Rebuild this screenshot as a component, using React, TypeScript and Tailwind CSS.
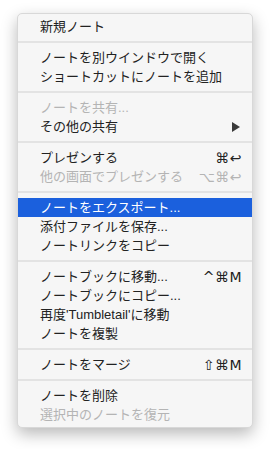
type Item = { label: string; shortcut?: string; disabled?: boolean; active?: boolean; submenu?: boolean };

const groups: Item[][] = [
  [{ label: "新規ノート" }],
  [{ label: "ノートを別ウインドウで開く" }, { label: "ショートカットにノートを追加" }],
  [{ label: "ノートを共有...", disabled: true }, { label: "その他の共有", submenu: true }],
  [
    { label: "プレゼンする", shortcut: "⌘↩" },
    { label: "他の画面でプレゼンする", shortcut: "⌥⌘↩", disabled: true },
  ],
  [
    { label: "ノートをエクスポート...", active: true },
    { label: "添付ファイルを保存..." },
    { label: "ノートリンクをコピー" },
  ],
  [
    { label: "ノートブックに移動...", shortcut: "^⌘M" },
    { label: "ノートブックにコピー..." },
    { label: "再度'Tumbletail'に移動" },
    { label: "ノートを複製" },
  ],
  [{ label: "ノートをマージ", shortcut: "⇧⌘M" }],
  [{ label: "ノートを削除" }, { label: "選択中のノートを復元", disabled: true }],
];

function Row({ item }: { item: Item }) {
  const color = item.active ? "text-white bg-[#1b60dd]" : item.disabled ? "text-[#b4b4b4]" : "text-[#222222]";
  return (
    <div className={`flex h-[19px] items-center justify-between pl-[22px] pr-[10px] ${color}`}>
      <span>{item.label}</span>
      {item.shortcut && (
        <span className="font-['DejaVu_Sans','Liberation_Sans',sans-serif] text-[14px] tracking-[0.5px]">
          {item.shortcut}
        </span>
      )}
      {item.submenu && (
        <svg width="8" height="10" viewBox="0 0 8 10" className="mr-[2px]">
          <path d="M0 0 L8 5 L0 10 Z" fill="#3a3a3a" />
        </svg>
      )}
    </div>
  );
}

export default function App() {
  return (
    <div className="h-[449px] w-[270px] bg-white pl-[17px] pt-[13px]">
      <div className="w-[236px] rounded-[5px] border border-[#d8d8d8] bg-[#f6f6f6] py-[3px] font-['Liberation_Sans','Noto_Sans_CJK_JP',sans-serif] text-[13px] leading-none shadow-[0_6px_16px_rgba(0,0,0,0.28)]">
        {groups.map((g, i) => (
          <div key={i}>
            {i > 0 && (
              <div className="flex h-[12px] items-center">
                <div className="h-[2px] w-full bg-[#e3e3e3]" />
              </div>
            )}
            {g.map((item) => (
              <Row key={item.label} item={item} />
            ))}
          </div>
        ))}
      </div>
    </div>
  );
}
